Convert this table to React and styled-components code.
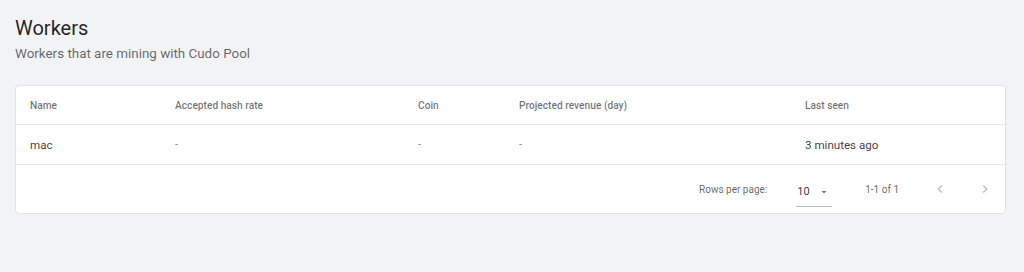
import React from "react"
import styled, { createGlobalStyle } from "styled-components"

const GlobalStyle = createGlobalStyle`
  html, body {
    margin: 0;
    padding: 0;
    background-color: #f2f3f5;
    font-family: Roboto, "Liberation Sans", Arial, sans-serif;
  }
`

const Page = styled.div`
  padding: 16px 18px 0 15px;
`

const Title = styled.h1`
  margin: 0;
  font-size: 20px;
  font-weight: 400;
  line-height: 24px;
  color: rgba(0, 0, 0, 0.87);
`

const Subtitle = styled.p`
  margin: 4px 0 0;
  font-size: 13.4px;
  line-height: 20px;
  color: rgba(0, 0, 0, 0.6);
`

const Card = styled.div`
  margin-top: 21px;
  background-color: #fff;
  border: 1px solid #e2e3e6;
  border-radius: 4px;
  overflow: hidden;
`

const Table = styled.table`
  width: 100%;
  border-collapse: collapse;
  table-layout: fixed;
`

const HeadCell = styled.th`
  height: 38px;
  padding: 0 0 0 14px;
  text-align: left;
  font-size: 10.2px;
  font-weight: 500;
  color: rgba(0, 0, 0, 0.56);
  border-bottom: 1px solid #e6e7e9;
`

const Cell = styled.td`
  height: 39px;
  padding: 0 0 0 14px;
  font-size: ${({ $muted }) => ($muted ? "11px" : "11.6px")};
  color: ${({ $muted }) => ($muted ? "rgba(0,0,0,0.5)" : "rgba(0,0,0,0.78)")};
  border-bottom: 1px solid #e6e7e9;
`

const Footer = styled.div`
  display: flex;
  align-items: center;
  justify-content: flex-end;
  height: 48px;
  font-size: 10px;
  color: rgba(0, 0, 0, 0.62);
`

const Select = styled.div`
  display: flex;
  align-items: center;
  justify-content: space-between;
  width: 36px;
  height: 30px;
  margin: 6px 33px 0 29px;
  padding: 0 2px 0 1px;
  box-sizing: border-box;
  border-bottom: 1px solid #b8b9bc;
  font-size: 11px;
  color: rgba(0, 0, 0, 0.8);
`

const Range = styled.span`
  margin-right: 21px;
`

const PageButton = styled.button`
  display: flex;
  align-items: center;
  justify-content: center;
  width: 40px;
  height: 40px;
  margin-left: ${({ $gap }) => $gap || 0}px;
  padding: 0;
  border: none;
  background: none;
  color: rgba(0, 0, 0, 0.26);
`

const columns = [
  { label: "Name", width: 145 },
  { label: "Accepted hash rate", width: 243 },
  { label: "Coin", width: 101 },
  { label: "Projected revenue (day)", width: 286 },
  { label: "Last seen" },
]

const workers = [
  { name: "mac", hashRate: "-", coin: "-", revenue: "-", lastSeen: "3 minutes ago" },
]

const Chevron = ({ left }) => (
  <svg width="16" height="16" viewBox="0 0 24 24" fill="currentColor">
    {left ? (
      <path d="M15.41 7.41 14 6l-6 6 6 6 1.41-1.41L10.83 12z" />
    ) : (
      <path d="M10 6 8.59 7.41 13.17 12l-4.58 4.59L10 18l6-6z" />
    )}
  </svg>
)

const App = () => {
  return (
    <Page>
      <GlobalStyle />
      <Title>Workers</Title>
      <Subtitle>Workers that are mining with Cudo Pool</Subtitle>
      <Card>
        <Table>
          <colgroup>
            {columns.map(col => (
              <col key={col.label} style={col.width ? { width: col.width } : undefined} />
            ))}
          </colgroup>
          <thead>
            <tr>
              {columns.map(col => (
                <HeadCell key={col.label}>{col.label}</HeadCell>
              ))}
            </tr>
          </thead>
          <tbody>
            {workers.map(w => (
              <tr key={w.name}>
                <Cell>{w.name}</Cell>
                <Cell $muted>{w.hashRate}</Cell>
                <Cell $muted>{w.coin}</Cell>
                <Cell $muted>{w.revenue}</Cell>
                <Cell>{w.lastSeen}</Cell>
              </tr>
            ))}
          </tbody>
        </Table>
        <Footer>
          <span>Rows per page:</span>
          <Select>
            <span>10</span>
            <svg width="12" height="12" viewBox="0 0 24 24" fill="rgba(0,0,0,0.54)">
              <path d="M7 10l5 5 5-5z" />
            </svg>
          </Select>
          <Range>1-1 of 1</Range>
          <PageButton aria-label="Previous page">
            <Chevron left />
          </PageButton>
          <PageButton aria-label="Next page" $gap={5}>
            <Chevron />
          </PageButton>
        </Footer>
      </Card>
    </Page>
  )
}

export default App
